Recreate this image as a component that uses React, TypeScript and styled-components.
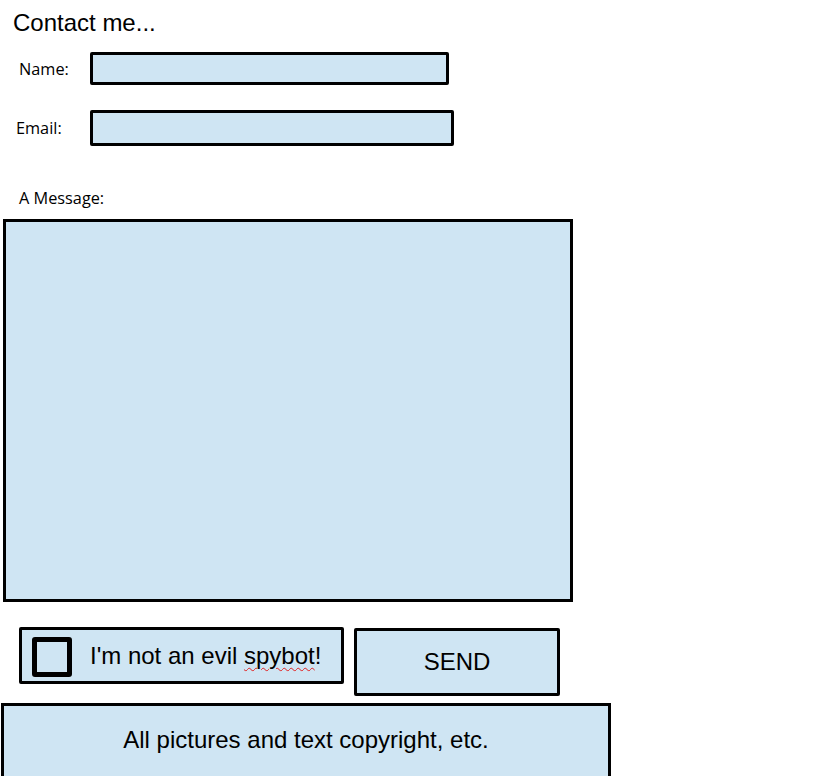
import React from "react";
import styled, { createGlobalStyle } from "styled-components";

const Global = createGlobalStyle`
  html, body { margin: 0; padding: 0; background: #ffffff; }
  body { font-family: "Liberation Sans", Arial, sans-serif; color: #000; overflow: hidden; }
  * { box-sizing: border-box; }
`;

const FILL = "#cfe5f3";

const Page = styled.div`
  width: 819px;
  padding-top: 9px;
  display: flex;
  flex-direction: column;
  align-items: flex-start;
`;

const Title = styled.h1`
  margin: 0 0 0 13px;
  font-family: "Liberation Sans", Arial, sans-serif;
  font-weight: normal;
  font-size: 24px;
  line-height: 28px;
`;

const FieldRow = styled.div<{ $top: number }>`
  display: flex;
  align-items: center;
  margin-top: ${(p) => p.$top}px;
`;

const Label = styled.label<{ $indent: number; $width?: number }>`
  font-family: "Open Sans", "Noto Sans", sans-serif;
  font-size: 16.3px;
  line-height: 20px;
  padding-left: ${(p) => p.$indent}px;
  width: ${(p) => (p.$width ? `${p.$width}px` : "auto")};
  flex: none;
`;

const Input = styled.div<{ $w: number; $h: number }>`
  width: ${(p) => p.$w}px;
  height: ${(p) => p.$h}px;
  background: ${FILL};
  border: 3.5px solid #000;
  border-radius: 2px;
  flex: none;
`;

const MessageLabel = styled(Label)`
  margin-top: 42px;
`;

const TextArea = styled.div`
  margin: 11px 0 0 3px;
  width: 570px;
  height: 383px;
  flex: none;
  background: ${FILL};
  border: 3px solid #000;
`;

const BottomRow = styled.div`
  display: flex;
  align-items: flex-start;
  gap: 10px;
  margin: 25px 0 0 19px;
`;

const CheckPanel = styled.div`
  width: 325px;
  height: 57px;
  background: ${FILL};
  border: 3px solid #000;
  border-radius: 2px;
  display: flex;
  align-items: center;
  padding-left: 10px;
  gap: 18px;
`;

const CheckBox = styled.span`
  width: 40px;
  height: 40px;
  border: 5px solid #000;
  border-radius: 3px;
  flex: none;
  margin-top: 2px;
`;

const CheckText = styled.span`
  font-size: 24px;
  line-height: 28px;
  white-space: nowrap;
`;

const Squiggle = styled.span`
  text-decoration: underline wavy #e02020;
  text-decoration-thickness: 1px;
  text-underline-offset: 3px;
`;

const SendButton = styled.div`
  margin-top: 1px;
  width: 206px;
  height: 68px;
  background: ${FILL};
  border: 3.5px solid #000;
  border-radius: 2px;
  display: flex;
  align-items: center;
  justify-content: center;
  font-size: 24px;
`;

const Footer = styled.footer`
  margin: 7px 0 0 1px;
  width: 610px;
  height: 78px;
  flex: none;
  padding-bottom: 4px;
  background: ${FILL};
  border: 3.5px solid #000;
  display: flex;
  align-items: center;
  justify-content: center;
  font-size: 24px;
`;

export default function App() {
  return (
    <>
      <Global />
      <Page>
        <Title>Contact me...</Title>
        <FieldRow $top={15}>
          <Label $indent={19} $width={90}>Name:</Label>
          <Input $w={359} $h={33} />
        </FieldRow>
        <FieldRow $top={25}>
          <Label $indent={16} $width={90}>Email:</Label>
          <Input $w={364} $h={36} />
        </FieldRow>
        <MessageLabel $indent={19}>A Message:</MessageLabel>
        <TextArea />
        <BottomRow>
          <CheckPanel>
            <CheckBox />
            <CheckText>
              I'm not an evil <Squiggle>spybot</Squiggle>!
            </CheckText>
          </CheckPanel>
          <SendButton>SEND</SendButton>
        </BottomRow>
        <Footer>All pictures and text copyright, etc.</Footer>
      </Page>
    </>
  );
}
